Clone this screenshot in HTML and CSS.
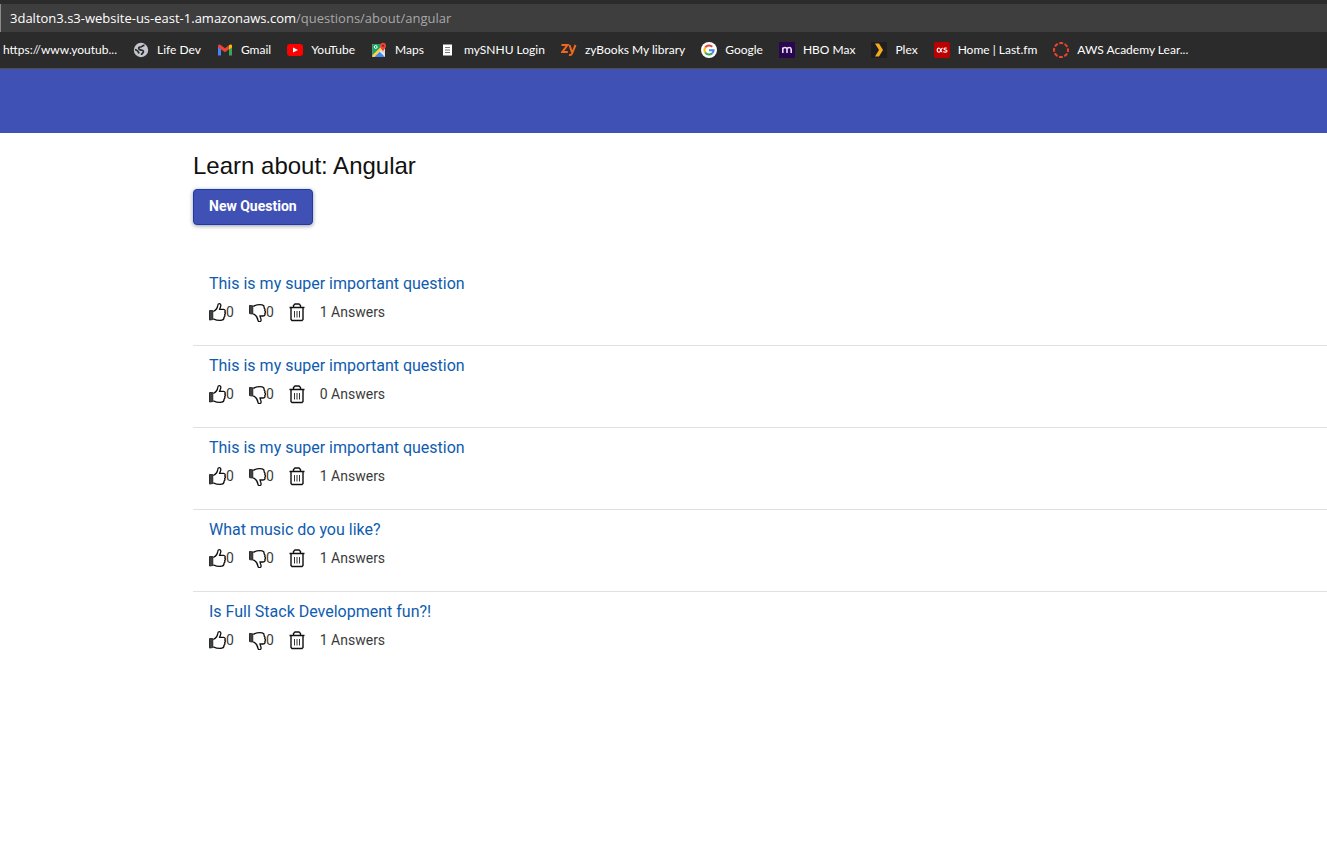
FILE: index.html
```
<!DOCTYPE html>
<html lang="en">
<head>
<meta charset="utf-8">
<title>Learn about: Angular</title>
<link rel="stylesheet" href="styles.css">
</head>
<body>
<svg class="sprite" aria-hidden="true">
  <symbol id="up" viewBox="0 0 18 20">
    <path class="cuff" d="M.5 8.500h3.500v9.500l-3.500.5z"/>
    <path class="line" d="M4.500 9.500C7.500 8 9 5.500 9.300 3C9.500.8 12 .6 12.500 2.500C12.800 4.200 11.600 5.500 11.200 7.200H15.500C17.200 7.300 17.500 9 16.800 10C17.500 11 17.300 12 16.600 12.700C17 13.800 16.800 14.800 16 15.300C16 17.500 15 18.500 13.500 18.700C10 19.300 7.500 18.600 4.500 17.200"/>
  </symbol>
  <symbol id="down" viewBox="0 -1 18 20">
    <path class="cuff" d="M.5 2l3.500.5v8.700l-3.500-.5z"/>
    <path class="line" d="M4.500 3C7.500 1.500 11 .8 14 1.500C15.700 2 16.300 3.200 16 4.700C16.900 5.500 17.200 6.500 16.700 7.500C17.600 8.500 17.500 9.700 16.800 10.500C17.300 12 16.700 13 15.300 13.200H11.700C11.900 15 13.200 16.500 12.700 18.100C12.200 19.700 9.900 19.500 9.500 17.800C9.200 15 7.500 12.500 4.500 11"/>
  </symbol>
  <symbol id="trash" viewBox="0 0 16 20">
    <path class="line" d="M.5 5.500h15M4.500 5V3.500L6 2h4l1.500 1.500V5M2 6v11.500l1 1h10l1-1V6"/>
    <path class="bars" d="M5.500 9v6.500M8 9v6.500M10.500 9v6.500"/>
  </symbol>
</svg>

<header class="browser">
  <div class="address"><span class="host">3dalton3.s3-website-us-east-1.amazonaws.com</span><span class="path">/questions/about/angular</span></div>
  <nav class="bookmarks" aria-label="Bookmarks">
    <a href="#">https://www.youtub...</a>
    <a href="#"><svg viewBox="0 0 16 16"><circle cx="8" cy="8" r="7.200" fill="#c3c7cd"/><path d="M11.500 3.500C9.500 3 9.500 5 7.500 5S5 6.500 6.500 7.500 10.500 7.500 10.500 9.500 8.500 11 8.500 13M2 7.500C4 8 5.500 9 6 11.500" fill="none" stroke="#2b2b2b" stroke-width="1.700"/></svg>Life Dev</a>
    <a href="#"><svg viewBox="0 0 16 16"><path d="M1 4v9.500h3V7z" fill="#4285f4"/><path d="M15 4v9.500h-3V7z" fill="#34a853"/><path d="M1 3.500C2 2 3 2.500 4 3.300l4 3 4-3v4L8 10.300 1 5.300z" fill="#ea4335"/><path d="M12 3.300c1-1 3-1 3 .7v1.500L12 7.500z" fill="#fbbc04"/></svg>Gmail</a>
    <a href="#"><svg viewBox="0 0 16 16"><rect y="2" width="16" height="12" rx="3" fill="#f00"/><path d="M6 5.500v5l5-2.500z" fill="#fff"/></svg>YouTube</a>
    <a href="#"><svg viewBox="0 0 16 16"><path d="M1.500 2h12.500v13H1.500z" fill="#e8eaed"/><path d="M1.500 2h9.500l-3 6-6.500 6z" fill="#1ea362"/><path d="M2 15l6-6 6 6z" fill="#4285f4"/><path d="M1.500 13L11 4l1.500 2L3.500 15h-2z" fill="#ffd34f"/><path d="M9.500 8l4.500 5V7z" fill="#dadce0"/><circle cx="4.700" cy="5" r="1.400" fill="none" stroke="#fff"/><path d="M12 10C11.500 7 9 6.500 9 3.700a3 3 0 016 0C15 6.500 12.500 7 12 10z" fill="#ea4335"/><circle cx="12" cy="3.700" r="1" fill="#8c1e16"/></svg>Maps</a>
    <a href="#"><svg viewBox="0 0 16 16"><path d="M3 2.500h9v11H3z" fill="#fff"/><path d="M5 5.500h5M5 8h5M5 10.500h5" stroke="#777"/></svg>mySNHU Login</a>
    <a href="#"><svg viewBox="0 0 16 16"><path d="M.5 3h6L1.300 10h5.500M8.500 3l2.300 7M14.500 3L11 11.500Q10.300 13.500 8 13" fill="none" stroke="#f0681d" stroke-width="2"/></svg>zyBooks My library</a>
    <a href="#"><svg viewBox="0 0 16 16"><circle cx="8" cy="8" r="8" fill="#fff"/><g fill="none" stroke-width="2"><path d="M4.200 5.500A4.600 4.600 0 0111.300 4.800" stroke="#ea4335"/><path d="M4.200 5.500a4.600 4.600 0 000 5" stroke="#fbbc05"/><path d="M4.200 10.500a4.600 4.600 0 007 .8" stroke="#34a853"/><path d="M8 8.200h4.600a4.600 4.600 0 01-1.400 3.100" stroke="#4285f4"/></g></svg>Google</a>
    <a href="#"><svg viewBox="0 0 16 16"><path d="M0 0h16v16H0z" fill="#29064f"/><path d="M3.800 11V5.500M3.800 7Q4.300 5.500 6 5.500T8 7.300V11M8 7Q8.500 5.500 10.200 5.500T12.200 7.300V11" fill="none" stroke="#e9dcf6" stroke-width="1.600"/></svg>HBO Max</a>
    <a href="#"><svg viewBox="0 0 16 16"><path d="M0 0h16v16H0z" fill="#1f1f1f"/><path d="M4 1.500h4l4 6.500-4 6.500H4L8 8z" fill="#f5ab1d"/></svg>Plex</a>
    <a href="#"><svg viewBox="0 0 16 16"><rect width="16" height="16" rx="2" fill="#ba0000"/><path d="M8.300 10C6.800 10.500 6.800 6 5 6c-2.400 0-2.400 4.200 0 4.200 2 0 1.500-4.200 3.800-4.200M12.700 6.300c-1-.6-2.700-.5-2.700.6 0 1.400 3 .8 3 2.100 0 1.400-2.600 1.400-3.800.6" fill="none" stroke="#fff" stroke-width="1.100"/></svg>Home | Last.fm</a>
    <a href="#"><svg viewBox="0 0 16 16"><circle cx="8" cy="8" r="7" fill="none" stroke="#f0432e" stroke-width="2" stroke-dasharray="3.900 1.600" stroke-dashoffset="1.950"/></svg>AWS Academy Lear...</a>
  </nav>
</header>
<div class="toolbar"></div>
<main class="content">
  <h1>Learn about: Angular</h1>
  <button class="new" type="button">New Question</button>
  <ul class="questions">
    <li>
      <a href="#">This is my super important question</a>
      <div class="meta"><button type="button" aria-label="Like"><svg><use href="#up"/></svg>0</button><button type="button" aria-label="Dislike"><svg><use href="#down"/></svg>0</button><button type="button" aria-label="Delete"><svg class="bin"><use href="#trash"/></svg></button><span>1 Answers</span></div>
    </li>
    <li>
      <a href="#">This is my super important question</a>
      <div class="meta"><button type="button" aria-label="Like"><svg><use href="#up"/></svg>0</button><button type="button" aria-label="Dislike"><svg><use href="#down"/></svg>0</button><button type="button" aria-label="Delete"><svg class="bin"><use href="#trash"/></svg></button><span>0 Answers</span></div>
    </li>
    <li>
      <a href="#">This is my super important question</a>
      <div class="meta"><button type="button" aria-label="Like"><svg><use href="#up"/></svg>0</button><button type="button" aria-label="Dislike"><svg><use href="#down"/></svg>0</button><button type="button" aria-label="Delete"><svg class="bin"><use href="#trash"/></svg></button><span>1 Answers</span></div>
    </li>
    <li>
      <a href="#">What music do you like?</a>
      <div class="meta"><button type="button" aria-label="Like"><svg><use href="#up"/></svg>0</button><button type="button" aria-label="Dislike"><svg><use href="#down"/></svg>0</button><button type="button" aria-label="Delete"><svg class="bin"><use href="#trash"/></svg></button><span>1 Answers</span></div>
    </li>
    <li>
      <a href="#">Is Full Stack Development fun?!</a>
      <div class="meta"><button type="button" aria-label="Like"><svg><use href="#up"/></svg>0</button><button type="button" aria-label="Dislike"><svg><use href="#down"/></svg>0</button><button type="button" aria-label="Delete"><svg class="bin"><use href="#trash"/></svg></button><span>1 Answers</span></div>
    </li>
  </ul>
</main>
</body>
</html>
```
FILE: styles.css
```
* { box-sizing: border-box; }
body { margin: 0; background: #fff; font-family: Roboto, sans-serif; color: #212121; }
.sprite { position: absolute; width: 0; height: 0; }

.browser {
  padding-top: 4px;
  background: #2b2b2b;
  border-bottom: 1px solid #55503c;
  font-family: "Open Sans", "Noto Sans", sans-serif;
}
.address {
  height: 28px;
  padding-left: 9px;
  border-left: 1px solid #8a8a8a;
  background: #3e3e3e;
  font-size: 13px;
  line-height: 28px;
  white-space: nowrap;
}
.host { color: #fff; }
.path { color: #a8a8a8; }
.bookmarks {
  display: flex;
  gap: 16px;
  height: 36px;
  padding: 0 0 1px 3px;
  overflow: hidden;
}
.bookmarks a {
  display: flex;
  flex: none;
  align-items: center;
  gap: 8px;
  color: #fff;
  font-family: Lato, "Open Sans", sans-serif;
  font-size: 12px;
  text-decoration: none;
  white-space: nowrap;
}
.bookmarks svg { width: 16px; height: 16px; }

.toolbar { height: 64px; background: #3f51b5; }
.content { padding: 17px 0 0 193px; }
h1 {
  margin: 0;
  font: 400 24px/32px "Liberation Sans", Arial, sans-serif;
  color: #111;
}
.new {
  display: block;
  height: 36px;
  margin-top: 7px;
  padding: 0 15px 2px;
  border: 1px solid #1c3aad;
  border-radius: 4px;
  background: #3f51b5;
  box-shadow: 0 1px 4px rgba(0, 0, 0, .4);
  color: #fff;
  font: 700 14px/32px Roboto, sans-serif;
}
.questions { margin: 39px 0 0; padding: 0; list-style: none; }
.questions li {
  height: 82px;
  padding: 8px 16px 0;
  border-bottom: 1px solid #e0e0e0;
}
.questions li:last-child { border-bottom: 0; }
.questions a {
  display: block;
  color: #0f5cb0;
  font-size: 16px;
  line-height: 24px;
  text-decoration: none;
}
.meta {
  display: flex;
  align-items: center;
  gap: 15px;
  height: 24px;
  margin-top: 4px;
  color: #3a3a3a;
  font-size: 14px;
}
.meta button {
  display: flex;
  align-items: center;
  padding: 0;
  border: 0;
  background: none;
  color: inherit;
  font: 400 14px/20px Roboto, sans-serif;
}
.meta svg { width: 17px; height: 20px; overflow: visible; }
.meta .bin { width: 16px; }
.cuff { fill: #3c4349; stroke: #222; stroke-width: 1; }
.line { fill: none; stroke: #111; stroke-width: 1.4; }
.bars { fill: none; stroke: #333; stroke-width: 1; }
```
